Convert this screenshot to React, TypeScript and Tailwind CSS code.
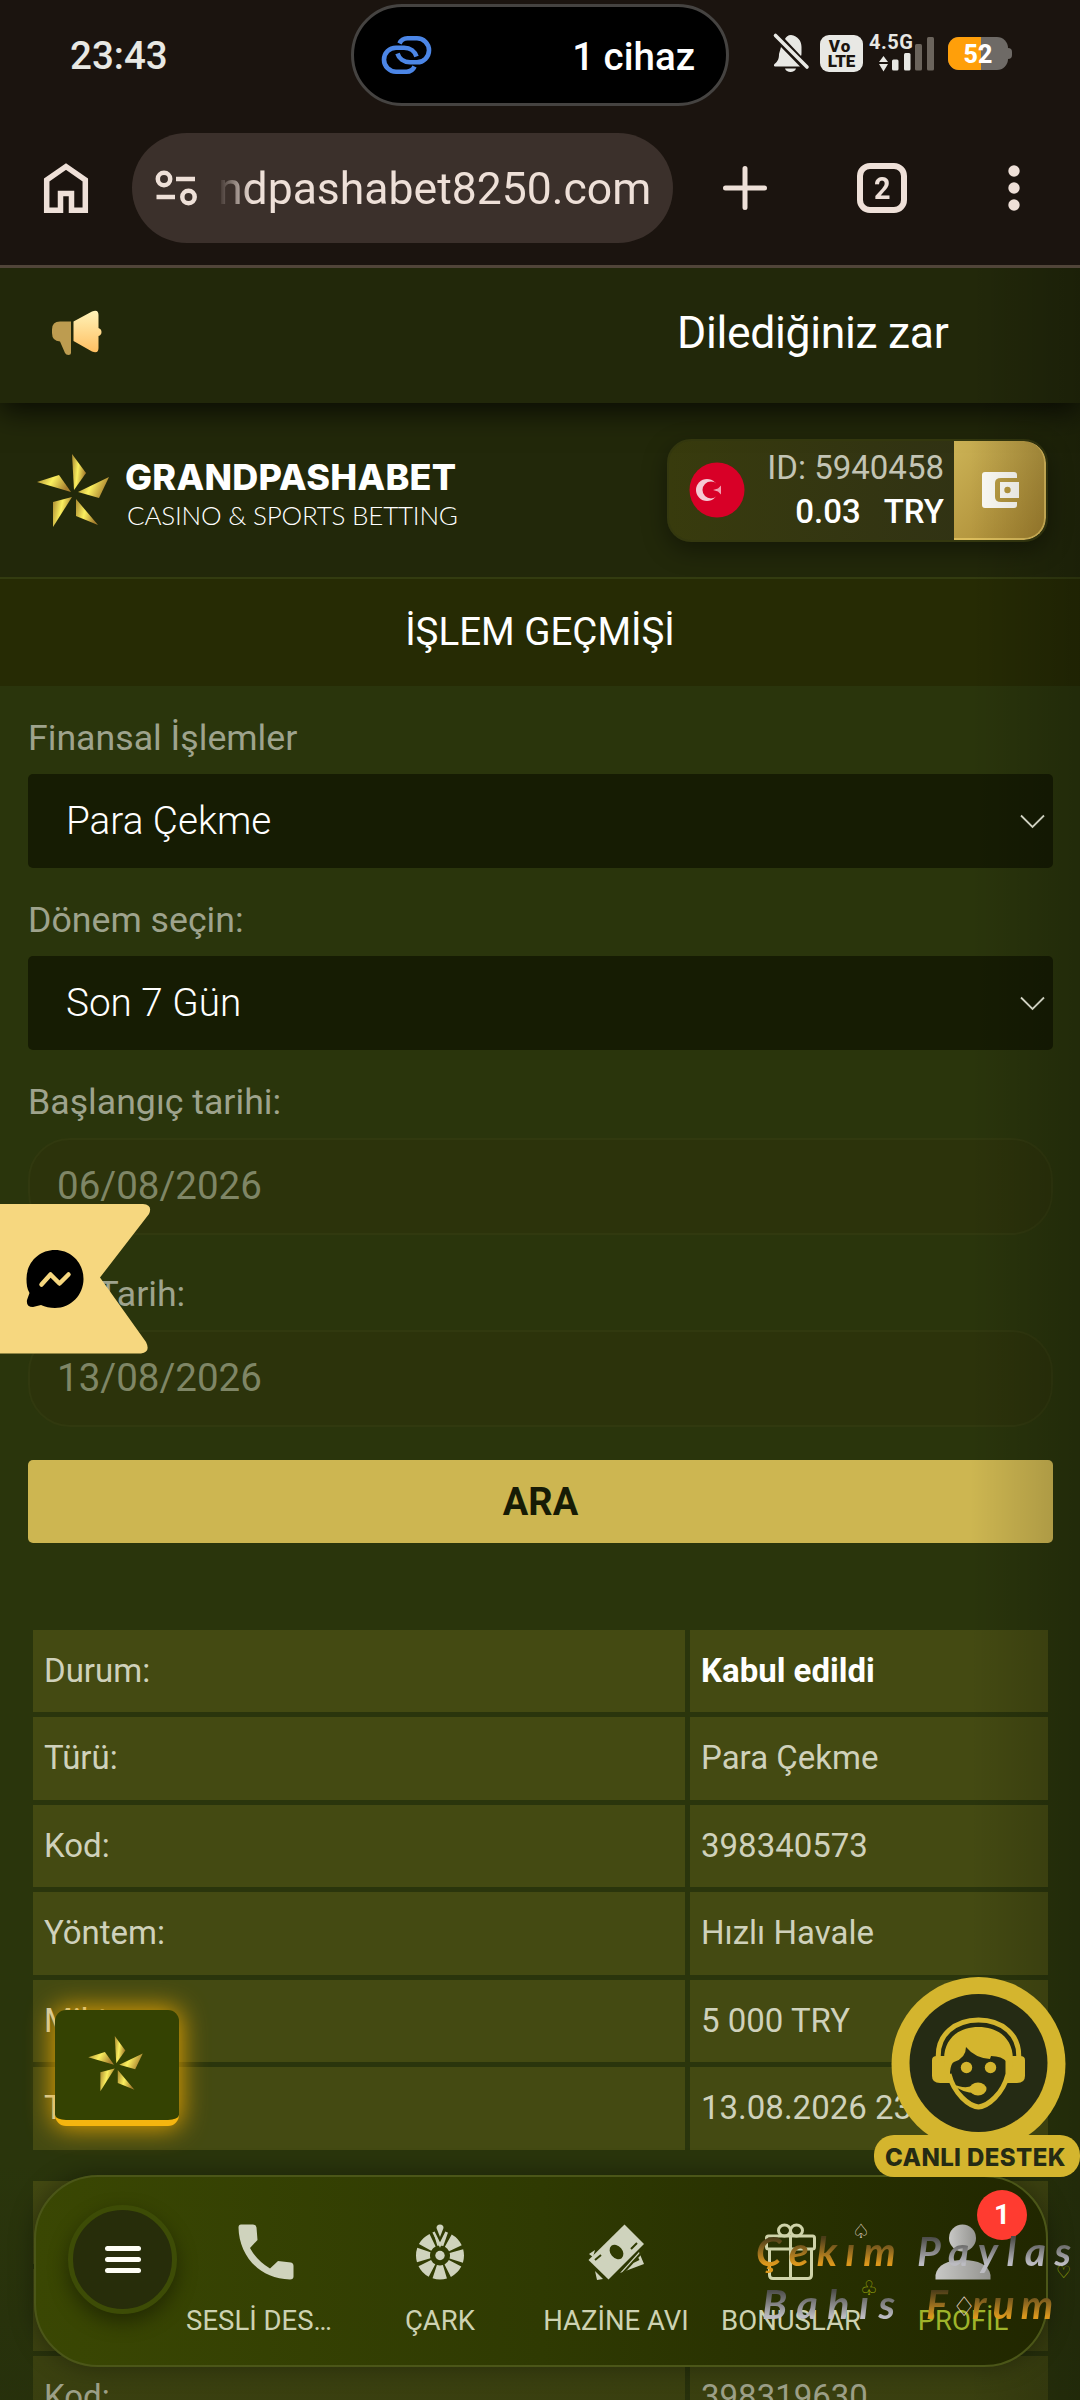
import React from 'react';

const records = [
  ['Durum:', 'Kabul edildi'],
  ['Türü:', 'Para Çekme'],
  ['Kod:', '398340573'],
  ['Yöntem:', 'Hızlı Havale'],
  ['Miktar:', '5 000 TRY'],
  ['Tarih:', '13.08.2026 23:07'],
];

const nextRecords = [
  ['Durum:', 'Kabul edildi'],
  ['Türü:', 'Para Çekme'],
  ['Kod:', '398319630'],
];

function StatusBar() {
  return (
    <div className="relative h-[112px] flex-none">
      <span className="absolute left-[70px] top-[33px] text-[38.5px] leading-[46px] font-medium text-[#e8e8e4]">23:43</span>
      <div className="absolute left-[351px] top-[4px] w-[378px] h-[102px] rounded-full bg-black border-[3px] border-[#454341] flex items-center justify-between pl-[27px] pr-[31px]">
        <svg width="52" height="40" viewBox="0 0 52 40" fill="none" stroke="#4c86e6" strokeWidth="4.6">
          <path d="M18.500 8.500 C20 5 23 3.300 26.500 3.300 H36 A11.700 11.700 0 0 1 36 27.300 H29 C22.500 27.300 18 23.500 16.500 18.500" />
          <path d="M33.500 31.500 C32 35 29 36.700 25.500 36.700 H15 A11.700 11.700 0 0 1 15 12.700 H23 C29.500 12.700 34 16.500 35.500 21.500" />
        </svg>
        <span className="mt-[3px] text-[38.5px] leading-[46px] font-medium text-white">1 cihaz</span>
      </div>
      <svg className="absolute left-[772px] top-[32px]" width="40" height="42" viewBox="0 0 40 42">
        <path d="M9 15 L28 34.500 H3 C2 34.500 1.500 33 2.500 32 C6 29 7 27 7 22 Z M13 7 C14 5 16 3 19 3 C26 4 29.500 9 29.500 15 V20 C29.500 22 29.500 23 29 24 Z M13 36.500 H24 C23 41 14 41 13 36.500 Z" fill="#e8e8e4" />
        <path d="M3.500 3.500 L35 35" stroke="#e8e8e4" strokeWidth="3.600" strokeLinecap="round" />
      </svg>
      <div className="absolute left-[820px] top-[35px] w-[43px] h-[37px] rounded-[9px] bg-[#e8e8e4] flex flex-col items-center justify-center text-[#1b140f] font-black">
        <span className="text-[17px] leading-[15px] tracking-[1px] mr-[3px]">Vo</span>
        <span className="text-[17px] leading-[15px]">LTE</span>
      </div>
      <span className="absolute left-[869px] top-[30px] text-[20px] leading-[24px] font-bold tracking-[0.5px] text-[#e8e8e4]">4.5G</span>
      <svg className="absolute left-[876px] top-[36px]" width="60" height="36" viewBox="0 0 60 36" fill="#e8e8e4">
        <path d="M7.500 20 L12 26 H3 Z M7.500 35.500 L12 28 H3 Z" />
        <rect x="16" y="23.500" width="6.500" height="11" rx="1.500" />
        <rect x="28" y="17" width="6.500" height="17.500" rx="1.500" />
        <rect x="39" y="8" width="7" height="26.500" rx="1.500" fill="#6b645c" />
        <rect x="51" y="1" width="7" height="33.500" rx="1.500" fill="#6b645c" />
      </svg>
      <div className="absolute left-[948px] top-[37px] w-[60px] h-[33px] rounded-[11px] overflow-hidden bg-[#6e6a66] flex items-center justify-center">
        <div className="absolute left-0 top-0 h-full w-[33px] bg-[#ff9f0a]" />
        <span className="relative mt-[2px] text-[25px] leading-[33px] font-extrabold text-white">52</span>
      </div>
      <div className="absolute left-[1008px] top-[48px] w-[4px] h-[11px] rounded-r-[4px] bg-[#6e6a66]" />
    </div>
  );
}

function BrowserBar() {
  return (
    <div className="h-[153px] flex-none flex items-start pt-[21px] text-[#eee0d8]">
      <svg className="ml-[43px] mt-[29px]" width="46" height="53" viewBox="0 0 46 53" fill="none" stroke="#eee0d8" strokeWidth="5.500">
        <path d="M3.700 48.200 V18 L23 4.500 L42.300 18 V48.200 H28.500 V31.500 H17.500 V48.200 Z" />
      </svg>
      <div className="ml-[43px] w-[541px] h-[110px] rounded-full bg-[#3b302b] flex items-center pl-[22px]">
        <svg width="44" height="38" viewBox="0 0 44 38" fill="none" stroke="#eee0d8" strokeWidth="4.500">
          <circle cx="10" cy="10" r="6.200" />
          <path d="M22 10 H41 M2.500 28 H21" />
          <circle cx="34.500" cy="28" r="6.200" />
        </svg>
        <span className="ml-[20px] text-[44.5px] leading-[60px] mt-[2px] whitespace-nowrap [mask-image:linear-gradient(to_right,transparent,black_34px)]">ndpashabet8250.com</span>
      </div>
      <svg className="ml-[49px] mt-[32px]" width="46" height="46" viewBox="0 0 46 46" stroke="#eee0d8" strokeWidth="5" strokeLinecap="round">
        <path d="M23 3.500 V42.500 M3.500 23 H42.500" />
      </svg>
      <div className="ml-[89px] mt-[30px] w-[50px] h-[50px] rounded-[13px] border-[6px] border-[#eee0d8] flex items-center justify-center text-[32px] leading-[38px] font-bold">
        <span className="scale-x-90">2</span>
      </div>
      <svg className="ml-[99px] mt-[30px]" width="16" height="50" viewBox="0 0 16 50" fill="#eee0d8">
        <circle cx="8" cy="8" r="5.700" />
        <circle cx="8" cy="25" r="5.700" />
        <circle cx="8" cy="42" r="5.700" />
      </svg>
    </div>
  );
}

function Star({ className, id }: { className: string; id: string }) {
  return (
    <svg className={className} viewBox="0 0 72 74">
      <defs>
        <linearGradient id={id} x1="0" y1="0" x2="1" y2="0.3">
          <stop offset="0" stopColor="#a8862f" />
          <stop offset="0.5" stopColor="#fbf05f" />
          <stop offset="1" stopColor="#a8802f" />
        </linearGradient>
      </defs>
      <path d="M35 0 L49 19 L37 36 Z" fill={`url(#${id})`} />
      <path d="M72 23 L62 44 L41 38 Z" fill={`url(#${id})`} />
      <path d="M61 71 L39 62 L39 45 Z" fill={`url(#${id})`} />
      <path d="M16 73 L16 48 L35 43 Z" fill={`url(#${id})`} />
      <path d="M0 28 L22 21 L34 38 Z" fill={`url(#${id})`} />
    </svg>
  );
}

function Header() {
  return (
    <>
      <div className="relative z-10 h-[135px] flex-none bg-[#22280a] shadow-[0_8px_28px_rgba(0,0,0,0.75)] flex items-center">
        <svg className="ml-[51px] mb-[6px]" width="51" height="46" viewBox="0 0 51 46">
          <defs>
            <linearGradient id="horn" x1="0" y1="0" x2="0" y2="1">
              <stop offset="0" stopColor="#fff3b8" />
              <stop offset="1" stopColor="#ffbf62" />
            </linearGradient>
          </defs>
          <path d="M20 11.500 V43 Q20 45 17.500 45 Q15 45 14 43 L9 31.500 Q1 31 1 23 V19.500 Q1 11.500 9 11.500 Z" fill="#bd9c50" />
          <path d="M22.500 11.500 L41 1.500 Q47.500 -1 47.500 5 V18 Q50.500 19 50.500 22 Q50.500 25 47.500 26 V38 Q47.500 44 41 41.500 L22.500 31 Z" fill="url(#horn)" />
        </svg>
        <span className="ml-[575px] mb-[6px] text-[44.5px] leading-[54px] tracking-[-0.3px] text-white whitespace-nowrap">Dilediğiniz zar</span>
      </div>
      <div className="h-[176px] flex-none bg-[#22280a] border-b-2 border-[#333c10] flex items-start">
        <Star id="gold" className="ml-[37px] mt-[51px] w-[72px] h-[74px]" />
        <div className="ml-[16px] mt-[54px] w-[360px] flex flex-col text-white whitespace-nowrap">
          <span className="font-[Inter] font-extrabold text-[36px] leading-[40px] tracking-[0.25px]">GRANDPASHABET</span>
          <span className="ml-[2px] mt-[1px] font-[Lato] font-light text-[26px] leading-[34px] tracking-[-0.2px]">CASINO &amp; SPORTS BETTING</span>
        </div>
        <div className="ml-[182px] mt-[36px] w-[381px] h-[103px] rounded-[24px] border-2 border-[#34380f] bg-linear-to-r from-[#383b0d] to-[#2f3015] shadow-[0_8px_24px_rgba(0,0,0,0.4)] flex overflow-hidden">
          <svg className="ml-[20px] mt-[21px]" width="56" height="56" viewBox="0 0 56 56">
            <circle cx="28" cy="28" r="27.500" fill="#d80027" />
            <circle cx="18" cy="28" r="11" fill="#f5c9d4" />
            <circle cx="22" cy="28" r="8.500" fill="#d80027" />
            <path d="M24 28 L29 26.500 L32 23.500 L32 32.500 L29 29.500 Z" fill="#f29db0" />
          </svg>
          <div className="w-[199px] pt-[7px] flex flex-col items-end text-[33px] leading-[39px] whitespace-nowrap">
            <span className="text-[#c3c4b4]">ID: 5940458</span>
            <span className="mt-[5px] font-medium text-white whitespace-pre">0.03<span className="ml-[23px]">TRY</span></span>
          </div>
          <div className="ml-auto w-[92px] h-full rounded-r-[22px] border-r-2 border-b-2 border-[#dcbd5c] bg-linear-to-br from-[#ccb356] to-[#a5842f] flex items-center justify-center">
            <svg className="mt-[1px] ml-[3px]" width="39" height="38" viewBox="0 0 39 38">
              <path d="M4 1 H33 Q36 1 36 4 V7 H20 Q14 7 14 12 V26 Q14 31 20 31 H36 V34 Q36 37 33 37 H4 Q1 37 1 34 V4 Q1 1 4 1 Z" fill="#fdfcf6" />
              <path d="M19 11 H38 V27 H19 Z" fill="#fdfcf6" />
              <circle cx="26.500" cy="19" r="3.200" fill="#b8993f" />
            </svg>
          </div>
        </div>
      </div>
      <h1 className="h-[107px] flex-none bg-[#262b04] text-center text-white text-[38.5px] leading-[105px]">İŞLEM GEÇMİŞİ</h1>
    </>
  );
}

function SelectField({ label, value }: { label: string; value: string }) {
  return (
    <div className="h-[182px]">
      <div className="h-[88px] pt-[32px] text-[35.7px] leading-[41px] text-[#9ea38d]">{label}</div>
      <div className="h-[94px] rounded-[5px] bg-[#161c03] flex items-center justify-between pl-[38px] pr-[8px]">
        <span className="text-[38.7px] leading-[46px] font-light text-white">{value}</span>
        <svg className="mt-[1px]" width="25" height="15" viewBox="0 0 25 15" fill="none" stroke="#e8ead8" strokeWidth="1.800">
          <path d="M1 1.500 L12.500 13 L24 1.500" />
        </svg>
      </div>
    </div>
  );
}

function DateField({ label, value }: { label: string; value: string }) {
  return (
    <>
      <div className="pt-[32px] text-[35.7px] leading-[41px] text-[#9ea38d]">{label}</div>
      <div className="mt-[15px] mb-[7px] h-[97px] rounded-[42px] border-2 border-[#31390f] bg-[#2c330b] pl-[27px] text-[38.5px] leading-[91px] text-[#7f8666]">{value}</div>
    </>
  );
}

function RecordTable({ rows }: { rows: string[][] }) {
  return (
    <div className="mx-[33px] w-[1015px] flex flex-col gap-[5px] text-[33px] leading-[39px] text-[#cfd1bb] whitespace-nowrap">
      {rows.map(([name, value], i) => (
        <div key={i} className="h-[82.5px] flex-none flex gap-[5px]">
          <div className="w-[652px] bg-[#444a12] pl-[11px] pt-[21px]">{name}</div>
          <div className={`w-[358px] bg-[#444a12] pl-[11px] pt-[21px] ${i === 0 ? 'font-bold text-white' : ''}`}>{value}</div>
        </div>
      ))}
    </div>
  );
}

function MessengerRibbon() {
  return (
    <svg className="absolute left-0 top-[1204px]" width="151" height="150" viewBox="0 0 151 150">
      <path d="M0 0 H143 Q153 1 149 10 L100 73.500 L146 138 Q151 148 141 149.500 H0 Z" fill="#f6d77f" />
      <path d="M55 46 C71 46 83.500 58.500 83.500 75 C83.500 91 71 104 55 104 C50 104 45 103 41 101 L33 103 Q26 103 27 96 L29.500 89 C27 85 26.500 80 26.500 75 C26.500 58.500 39 46 55 46 Z" fill="#000" />
      <path d="M41.500 80.500 L50.500 70.500 L59.500 79.500 L68.500 70.500" fill="none" stroke="#f6d77f" strokeWidth="4.500" strokeLinecap="round" strokeLinejoin="round" />
    </svg>
  );
}

function LiveSupport() {
  return (
    <div className="absolute left-[874px] top-[1976px] w-[206px] h-[201px]">
      <svg className="absolute left-0 top-0" width="206" height="201" viewBox="0 0 206 201">
        <circle cx="104.500" cy="88" r="87" fill="#d4b52e" />
        <rect x="0" y="159" width="206" height="42" rx="20" fill="#d4b52e" />
        <circle cx="104.500" cy="87" r="69" fill="#252b14" />
        <path d="M64.500 84 C62 58 82 44 104.500 44 C127 44 147 58 144.500 84" fill="none" stroke="#d4b52e" strokeWidth="5" />
        <path d="M58 84 Q58 80 63 80 H76 V107 H66 Q58 107 58 100 Z" fill="#d4b52e" />
        <path d="M151 84 Q151 80 146 80 H133 V107 H143 Q151 107 151 100 Z" fill="#d4b52e" />
        <path d="M71 92 C66 65 83 51 104.500 51 C126 51 143 65 138 92 L133 86 Q128 80 117 80 L116 83 Q101 82 92 71 Q92 82 80 86 Q77 87 76 96 Z" fill="#d4b52e" />
        <path d="M75 98 C80 118 95 130 104.500 131 C114 130 129 118 134 98 V84" fill="none" stroke="#d4b52e" strokeWidth="5" />
        <circle cx="92.500" cy="91.500" r="5.700" fill="#d4b52e" />
        <circle cx="116.500" cy="91.500" r="5.700" fill="#d4b52e" />
        <path d="M78 108 Q90 113 98 110 L102 117 Q88 117 78 108 Z" fill="#d4b52e" />
        <ellipse cx="104" cy="113" rx="8.500" ry="6.500" fill="#d4b52e" />
      </svg>
      <span className="absolute left-[11px] top-[168px] font-[Inter] font-extrabold text-[24px] leading-[28px] tracking-[0.4px] text-[#252b14] whitespace-nowrap">CANLI DESTEK</span>
    </div>
  );
}

function NavItem({ label, width, iconShift, active, children }: { label: string; width: string; iconShift?: string; active?: boolean; children: React.ReactNode }) {
  return (
    <div className={`${width} flex flex-col items-center`}>
      <svg className={`mt-[46px] ${iconShift ?? ''}`} width="58" height="58" viewBox="0 0 58 58" fill="#cfd3bd">
        {children}
      </svg>
      <span className={`mt-[24px] text-[27.5px] leading-[32px] whitespace-nowrap ${active ? 'text-[#9fb42a]' : 'text-[#cdd2b2]'}`}>{label}</span>
    </div>
  );
}

function BottomNav() {
  return (
    <div className="absolute left-[34px] top-[2175px] w-[1014px] h-[192px] rounded-[64px] border-2 border-[#4b5618] bg-linear-to-r from-[#3a4703] via-[#2f3a02] to-[#212700] shadow-[0_0_24px_rgba(0,0,0,0.35)] flex">
      <div className="ml-[32px] mt-[28px] w-[109px] h-[109px] rounded-full border-[5px] border-[#3d4c06] bg-[#272d0a] shadow-[0_8px_20px_rgba(0,0,0,0.4)] flex flex-col items-center justify-center gap-[6px]">
        <div className="w-[36px] h-[5px] rounded-full bg-[#fdfdf5]" />
        <div className="w-[36px] h-[5px] rounded-full bg-[#fdfdf5]" />
        <div className="w-[36px] h-[5px] rounded-full bg-[#fdfdf5]" />
      </div>
      <NavItem label="SESLİ DES…" width="ml-[-7px] w-[178px]" iconShift="ml-[14px]">
        <path d="M4 1.500 H16 Q19 1.500 19.500 4.500 L20.500 17 L13 25 Q20 38 33 45.500 L41 38 L54 39.500 Q56.500 40 56.500 43 V53.500 Q56.500 56.500 53 56.500 C22 56 2 32 1.500 4.500 Q1.500 1.500 4 1.500 Z" />
      </NavItem>
      <NavItem label="ÇARK" width="ml-[1px] w-[182px]">
        <circle cx="29" cy="32.500" r="17" fill="none" stroke="#cfd3bd" strokeWidth="14" strokeDasharray="10.400 2.950" strokeDashoffset="5.200" />
        <circle cx="29" cy="32.500" r="4.700" />
        <path d="M20 4 L38 4 L29 24 Z" fill="#303b02" />
        <path d="M22.500 9 L29 22 L35.500 9" fill="none" stroke="#cfd3bd" strokeWidth="2.500" />
        <path d="M25.500 5 Q25.500 1.500 29 1.500 Q32.500 1.500 32.500 5 L29 14 Z" />
      </NavItem>
      <NavItem label="HAZİNE AVI" width="ml-[1px] w-[168px]">
        <path d="M2 31 L8 27 L6 34 Z M8 48 L16 56 L10 57 Z M52 29 L57 41 L33 50 Z" />
        <path d="M37.500 1.500 L57 21 L21.500 56.500 L1.500 37 Z" />
        <ellipse cx="29.500" cy="29" rx="6" ry="8" transform="rotate(-40 29.500 29)" fill="#303b02" />
        <path d="M8 37 L14 32 M44 26 L50 20 M36 50 L57 27 M46 39 L52 36" stroke="#303b02" strokeWidth="2" />
      </NavItem>
      <NavItem label="BONUSLAR" width="w-[182px]">
        <g fill="none" stroke="#cfd3a9" strokeWidth="3">
          <rect x="4.500" y="13" width="48" height="13" rx="2" />
          <path d="M7.500 26 V52 Q7.500 55.500 11 55.500 H46 Q49.500 55.500 49.500 52 V26 M28.500 13 V55.500" />
          <ellipse cx="22.500" cy="7.500" rx="6" ry="5.500" />
          <ellipse cx="34.500" cy="7.500" rx="6" ry="5.500" />
        </g>
      </NavItem>
      <NavItem label="PROFİL" width="w-[162px]" active>
        <defs>
          <linearGradient id="person" x1="0" y1="0" x2="1" y2="0">
            <stop offset="0" stopColor="#c8c8c6" />
            <stop offset="1" stopColor="#93938f" />
          </linearGradient>
        </defs>
        <circle cx="28.500" cy="15" r="13.500" fill="url(#person)" />
        <path d="M1.500 56.500 V52 C3 42 14 37 29 37 C44 37 55 42 56.500 52 V56.500 Z" fill="url(#person)" />
      </NavItem>
      <div className="absolute left-[941px] top-[13px] w-[50px] h-[50px] rounded-full bg-[#ff3b30] flex items-center justify-center text-[28px] leading-[50px] font-bold text-white">1</div>
    </div>
  );
}

function Watermark() {
  const gold = 'bg-linear-to-b from-[#4a3c18] from-25% to-[#dc981c] to-75% bg-clip-text text-transparent';
  const silver = 'bg-linear-to-b from-[#4c4c48] from-25% to-[#bcbcc2] to-75% bg-clip-text text-transparent';
  return (
    <div className="absolute left-[756px] top-[2224px] w-[324px] h-[120px] font-[Lato] font-bold italic text-[41px] leading-[53px] whitespace-nowrap">
      <div className="flex">
        <span className={`w-[161px] tracking-[8px] ${gold}`}>Çekım</span>
        <span className={`tracking-[8.5px] ${silver}`}>Paylas</span>
      </div>
      <div className="flex pl-[6px]">
        <span className={`w-[164px] tracking-[9.5px] ${silver}`}>Bahıs</span>
        <span className={`w-[46px] ${gold}`}>F</span>
        <span className={`tracking-[6px] ${gold}`}>rum</span>
      </div>
      <span className="absolute left-[96px] top-[-14px] font-normal not-italic text-[20px] leading-[40px] text-[#d8c8b8]">♤</span>
      <span className="absolute left-[104px] top-[43px] font-normal not-italic text-[20px] leading-[40px] text-[#9aa60c]">♧</span>
      <span className="absolute left-[300px] top-[28px] font-normal not-italic text-[17px] leading-[40px] text-[#9aa60c]">♡</span>
      <span className="absolute left-[196px] top-[62px] font-normal not-italic text-[27px] leading-[40px] text-[#e4d4c4]">♢</span>
    </div>
  );
}

export default function App() {
  return (
    <div className="relative w-[1080px] h-[2400px] overflow-hidden bg-[#1b140f] font-[Roboto,sans-serif]">
      <div className="flex flex-col">
        <StatusBar />
        <BrowserBar />
        <div className="h-[3px] flex-none bg-[#514539]" />
        <div className="relative isolate h-[2132px] flex flex-col overflow-hidden bg-[#2a350c]">
          <Header />
          <div className="px-[28px] w-[1081px] flex-none">
            <SelectField label="Finansal İşlemler" value="Para Çekme" />
            <SelectField label="Dönem seçin:" value="Son 7 Gün" />
            <DateField label="Başlangıç tarihi:" value="06/08/2026" />
            <DateField label="Son Tarih:" value="13/08/2026" />
            <button className="mt-[33px] block w-full h-[83px] rounded-[5px] bg-[#cdb651] pt-[2px] text-[38px] font-bold text-[#171b05]">ARA</button>
          </div>
          <div className="mt-[86.5px] flex flex-col gap-[31.5px]">
            <RecordTable rows={records} />
            <RecordTable rows={nextRecords} />
          </div>
          <div className="absolute right-0 top-0 z-10 w-[110px] h-full bg-linear-to-r from-transparent to-black/20" />
          <div className="absolute left-0 bottom-0 z-10 w-full h-[240px] bg-linear-to-b from-transparent to-[#20260a]/30" />
        </div>
      </div>
      <MessengerRibbon />
      <div className="absolute left-[55px] top-[2010px] w-[124px] h-[116px] rounded-[11px] border-b-[6px] border-[#f5b50f] bg-[#344202] shadow-[0_0_26px_2px_rgba(255,176,0,0.85)]">
        <Star id="goldSmall" className="ml-[33px] mt-[26px] w-[55px] h-[56px]" />
      </div>
      <BottomNav />
      <Watermark />
      <LiveSupport />
    </div>
  );
}
